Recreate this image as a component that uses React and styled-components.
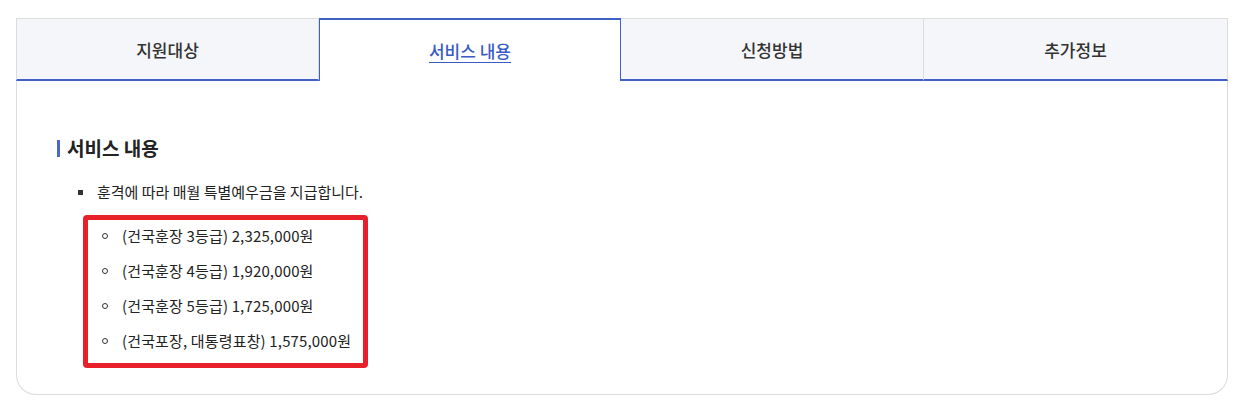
import React from 'react';
import styled, { createGlobalStyle } from 'styled-components';

const GlobalStyle = createGlobalStyle`
  body {
    margin: 0;
    background: #fff;
    font-family: "Noto Sans CJK KR", "Noto Sans", sans-serif;
    color: #222;
  }
`

const Page = styled.div`
  padding: 18px 16px 0 16px;
`

const Card = styled.div`
  width: 1212px;
  box-sizing: border-box;
  height: 377px;
  border: 1px solid #dcdcdc;
  border-top: none;
  border-radius: 0 0 20px 20px;
`

const TabRow = styled.div`
  display: grid;
  grid-template-columns: 303px 302px 303px 1fr;
  margin: 0 -1px;
`

const Tab = styled.div`
  height: 63px;
  box-sizing: border-box;
  display: flex;
  align-items: center;
  justify-content: center;
  font-size: 17px;
  font-weight: 500;
  background: ${p => (p.$active ? '#fff' : '#f5f6fa')};
  color: ${p => (p.$active ? '#3a5bc5' : '#333')};
  text-decoration: ${p => (p.$active ? 'underline' : 'none')};
  text-underline-offset: 4px;
  border-top: ${p => (p.$active ? '2px solid #3f5fc4' : '1px solid #dcdcdc')};
  border-left: ${p => (p.$active ? '1px solid #3f5fc4' : p.$first ? '1px solid #dcdcdc' : 'none')};
  border-right: 1px solid ${p => (p.$active ? '#3f5fc4' : '#dcdcdc')};
  border-bottom: ${p => (p.$active ? 'none' : '2px solid #3f5fc4')};
  padding-top: ${p => (p.$active ? '0' : '1px')};
  cursor: pointer;
`

const Content = styled.div`
  padding: 55px 40px 0 40px;
`

const Heading = styled.h3`
  margin: 0;
  display: flex;
  align-items: center;
  gap: 7px;
  font-size: 19px;
  font-weight: 700;
  line-height: 24px;
  color: #222;
  &::before {
    content: '';
    width: 3px;
    height: 17px;
    background: #4a67c9;
  }
`

const List = styled.ul`
  list-style: none;
  margin: 20px 0 0 0;
  padding: 0 0 0 21px;
`

const Item = styled.li`
  position: relative;
  padding-left: 19px;
  font-size: 15px;
  line-height: 24px;
  color: #222;
  &::before {
    content: '';
    position: absolute;
    left: 0;
    top: 10px;
    width: 5px;
    height: 5px;
    background: #333;
  }
`

const Highlight = styled.ul`
  list-style: none;
  margin: 11px 0 0 26px;
  width: 285px;
  box-sizing: border-box;
  border: 5px solid #e8202a;
  border-radius: 4px;
  padding: 4px 0 10px 14px;
`

const SubItem = styled.li`
  position: relative;
  padding-left: 20px;
  font-size: 15px;
  line-height: 24px;
  letter-spacing: 0.15px;
  color: #222;
  & + & {
    margin-top: 11px;
  }
  &::before {
    content: '';
    position: absolute;
    left: 0;
    top: 9px;
    width: 4px;
    height: 4px;
    border: 1px solid #333;
    border-radius: 50%;
  }
`

const tabs = ['지원대상', '서비스 내용', '신청방법', '추가정보']
const amounts = [
  '(건국훈장 3등급) 2,325,000원',
  '(건국훈장 4등급) 1,920,000원',
  '(건국훈장 5등급) 1,725,000원',
  '(건국포장, 대통령표창) 1,575,000원',
]

export default function App() {
  return (
    <Page>
      <GlobalStyle />
      <Card>
        <TabRow>
          {tabs.map((t, i) => (
            <Tab key={t} $active={i === 1} $first={i === 0}>{t}</Tab>
          ))}
        </TabRow>
        <Content>
          <Heading>서비스 내용</Heading>
          <List>
            <Item>훈격에 따라 매월 특별예우금을 지급합니다.</Item>
          </List>
          <Highlight>
            {amounts.map(a => (
              <SubItem key={a}>{a}</SubItem>
            ))}
          </Highlight>
        </Content>
      </Card>
    </Page>
  );
}
